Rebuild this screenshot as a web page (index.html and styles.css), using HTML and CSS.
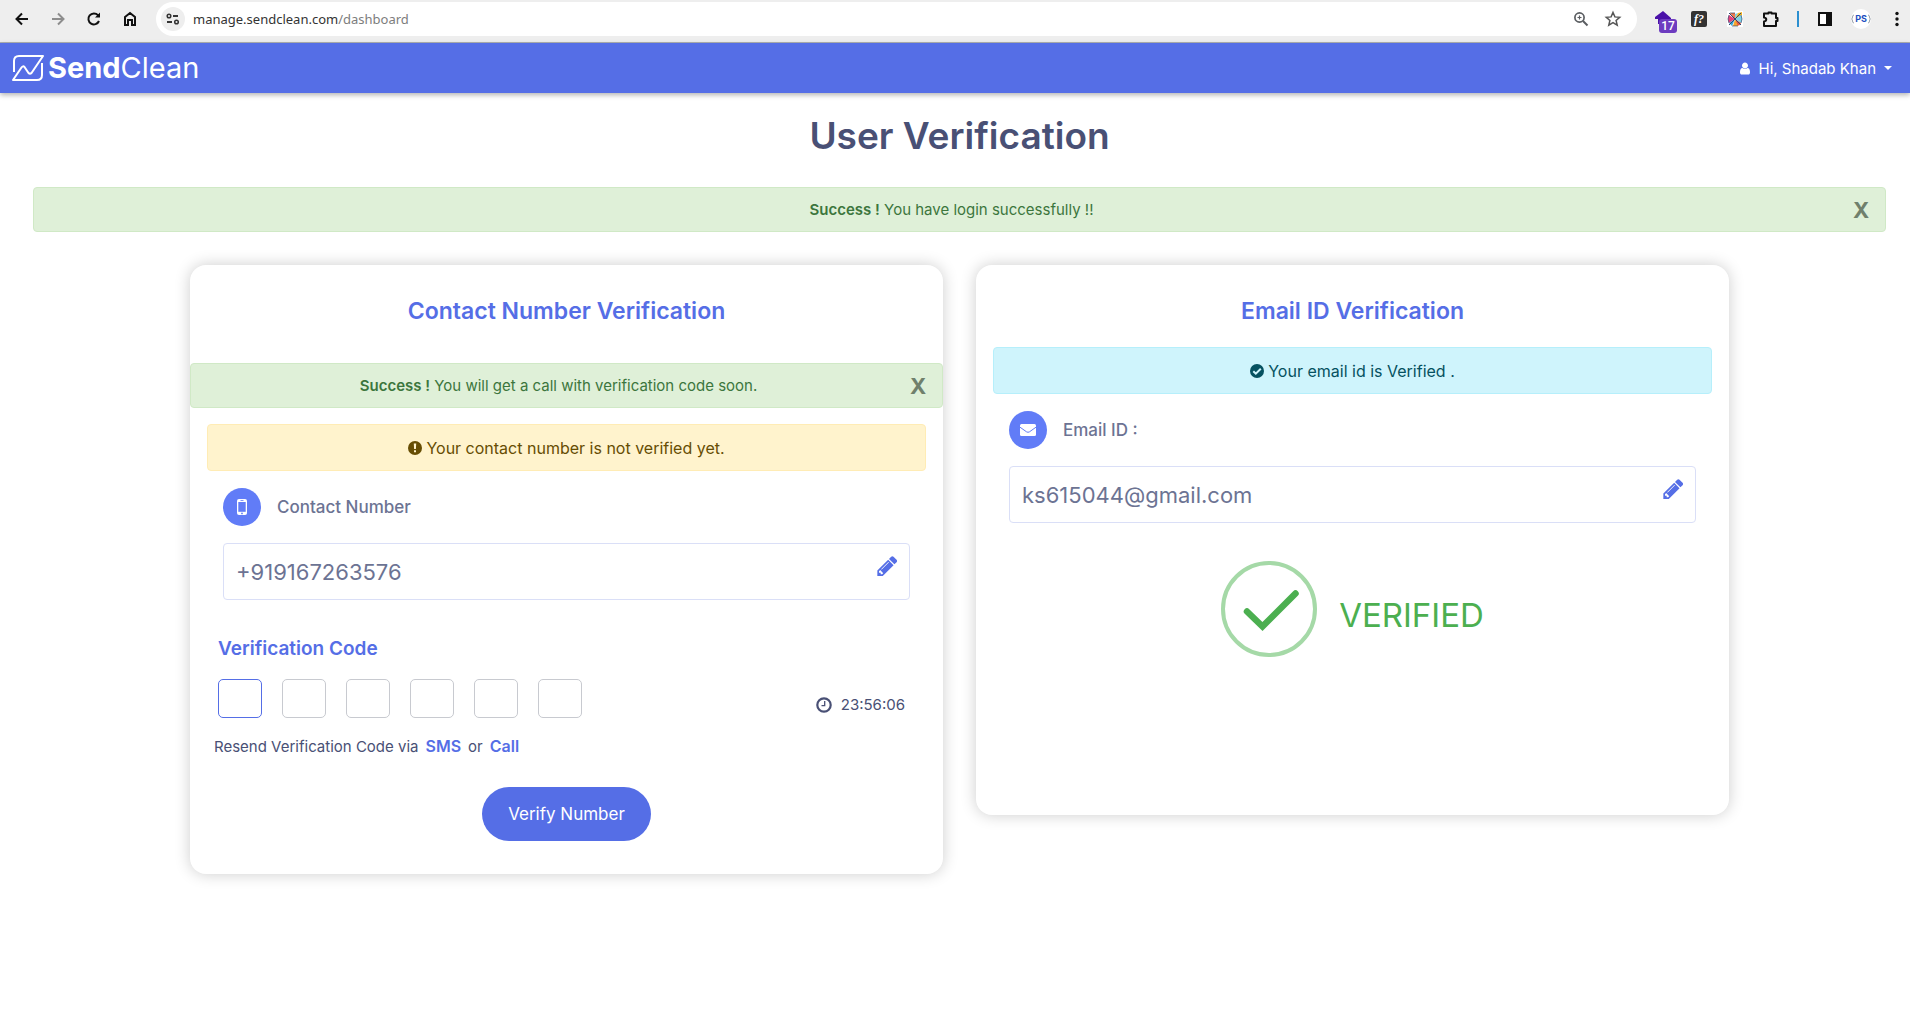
FILE: index.html
```
<!DOCTYPE html>
<html lang="en">
<head>
<meta charset="utf-8">
<title>SendClean - User Verification</title>
<link rel="stylesheet" href="styles.css">
</head>
<body>
<div class="toolbar">
  <div class="tools">
    <button class="tool" aria-label="Back"><svg width="14" height="14" viewBox="0 0 14 14" fill="none" stroke="#111" stroke-width="2"><path d="M13 7H2M7 1.5L1.5 7 7 12.5"/></svg></button>
    <button class="tool" aria-label="Forward"><svg width="14" height="14" viewBox="0 0 14 14" fill="none" stroke="#8d8d8d" stroke-width="2"><path d="M1 7h11M7 1.5L12.500 7 7 12.500"/></svg></button>
    <button class="tool" aria-label="Reload"><svg width="14" height="14" viewBox="0 0 14 14" fill="none" stroke="#111" stroke-width="2"><path d="M12 9A5.500 5.500 0 1 1 11 3.200L12 4.500"/><path d="M13 .5v5H8z" fill="#111" stroke="none"/></svg></button>
    <button class="tool" aria-label="Home"><svg width="14" height="16" viewBox="0 0 14 16" fill="none" stroke="#111" stroke-width="2"><path d="M2 6L7 2l5 4v8H9V9H5v5H2z"/></svg></button>
  </div>
  <div class="omnibox">
    <button class="site-info" aria-label="Site information"><svg width="14" height="12" viewBox="0 0 14 12" fill="none" stroke="#333" stroke-width="2"><circle cx="3" cy="3" r="1.800" stroke-width="1.500"/><path d="M7 3h5M1 9h5"/><circle cx="10.500" cy="9" r="1.800" stroke-width="1.500"/></svg></button>
    <span class="url">manage.sendclean.com<span class="url-path">/dashboard</span></span>
    <button class="tool" aria-label="Zoom"><svg width="16" height="16" viewBox="0 0 16 16" fill="none" stroke="#5a5d61"><circle cx="6.500" cy="6.500" r="4.600" stroke-width="1.700"/><path d="M10 10l4.500 4.500" stroke-width="2"/><path d="M4.500 6.500h4M6.500 4.500v4" stroke-width="1.200"/></svg></button>
    <button class="tool" aria-label="Bookmark"><svg width="16" height="16" viewBox="0 0 16 16" fill="none" stroke="#555" stroke-width="1.500"><path d="M8 1.500l1.900 4.400 4.800.4-3.600 3.100 1.100 4.700L8 11.600l-4.200 2.500 1.100-4.700L1.300 6.300l4.800-.4z"/></svg></button>
  </div>
  <div class="tools">
    <button class="tool" aria-label="Home extension"><svg width="24" height="24" viewBox="0 0 24 24"><path d="M12 4l8 7v1H17V17H7v-5H4v-2z" fill="#4a11a8"/><rect x="8" y="12" width="18" height="14" rx="3" fill="#6d3cc0"/><text x="17" y="23" text-anchor="middle" class="badge-text">17</text></svg></button>
    <button class="tool" aria-label="Font finder"><svg width="16" height="16" viewBox="0 0 16 16"><rect width="16" height="16" rx="2" fill="#333"/><text x="3" y="12" class="font-text">f?</text></svg></button>
    <button class="tool" aria-label="Color extension"><svg width="16" height="16" viewBox="0 0 16 16"><rect width="16" height="16" fill="#fff"/><path d="M8 8L2 4Q0 8 2 12z" fill="#e8407a"/><path d="M8 8L3 2h5z" fill="#f0764a"/><path d="M8 8V3l3-1z" fill="#7ad0e8"/><path d="M8 8l3-6 4-1v3z" fill="#f6b21b"/><path d="M8 8l6-4q2 4 0 8z" fill="#7fd4e8"/><path d="M8 8l6 4-1 2-3 1z" fill="#e8563f"/><path d="M8 8l3 7H6z" fill="#f5a62d"/><path d="M8 8l-3 7-3-3z" fill="#35a8da"/><path d="M2 2l12 12M14 2L2 14" stroke="#31476e" stroke-width="1"/><path d="M2 4Q0 8 2 12M5 15h6M3 2h5M14 4q2 4 0 8" fill="none" stroke="#31476e" stroke-width=".7"/></svg></button>
    <button class="tool" aria-label="Extensions"><svg width="18" height="18" viewBox="0 0 18 18" fill="none" stroke="#111" stroke-width="2" stroke-linejoin="round"><path d="M2 3.500h4.500V2.500h3v1H14V8h1.500v3H14v5H2v-4.500c3-.5 3-3.500 0-4z"/></svg></button>
    <span class="divider"></span>
    <button class="tool" aria-label="Side panel"><svg width="14" height="14" viewBox="0 0 14 14"><rect x="1" y="1" width="12" height="12" fill="#fff" stroke="#111" stroke-width="2"/><path d="M8 1h5v12H8z" fill="#111"/></svg></button>
    <button class="tool" aria-label="Profile"><svg width="20" height="20" viewBox="0 0 20 20"><circle cx="10" cy="10" r="10" fill="#fff"/><path d="M3 6Q1.500 6 1.500 8T.500 10Q1.500 10 1.500 12T3 14M17 6q1.500 0 1.500 2t1 2q-1 0-1 2T17 14" fill="none" stroke="#9aa3ad"/><text x="10" y="13" text-anchor="middle" class="profile-text">PS</text></svg></button>
    <button class="tool" aria-label="Menu"><svg width="4" height="16" viewBox="0 0 4 16" fill="#111"><circle cx="2" cy="2.500" r="1.700"/><circle cx="2" cy="8" r="1.700"/><circle cx="2" cy="13.500" r="1.700"/></svg></button>
  </div>
</div>

<header class="navbar">
  <a class="brand" href="#">
    <svg width="32" height="26" viewBox="0 0 32 26" fill="none" stroke="#fff" stroke-width="2" stroke-linejoin="round"><path d="M2 17V6q0-5 5-5h24L19.500 18q-1.500 1.500-3 0l-4-6q-1.500-1.500-3 .5L1 25h24q5 0 5-5V8"/></svg>
    <span class="brand-name"><b>Send</b>Clean</span>
  </a>
  <button class="user-menu">
    <svg width="12" height="13" viewBox="128 64 1536 1664" fill="#fff"><path d="M1536 1399q0 109-62.500 187t-150.500 78h-854q-88 0-150.500-78t-62.500-187q0-85 8.500-160.500t31.500-152 58.500-131 94-89 134.500-34.500q131 128 313 128t313-128q76 0 134.500 34.500t94 89 58.500 131 31.500 152 8.500 160.500zm-256-887q0 159-112.500 271.500t-271.500 112.500-271.500-112.500-112.500-271.500 112.500-271.500 271.500-112.500 271.500 112.500 112.500 271.500z"/></svg>
    <span>Hi, Shadab Khan</span>
    <span class="caret"></span>
  </button>
</header>

<main class="page">
  <h1>User Verification</h1>
  <div class="alert success" role="alert">
    <span class="alert-text"><strong>Success !</strong> You have login successfully !!</span>
    <button class="close" aria-label="Close">X</button>
  </div>

  <div class="cards">
    <section class="card">
      <h2>Contact Number Verification</h2>
      <div class="alert success inset" role="alert">
        <span class="alert-text"><strong>Success !</strong> You will get a call with verification code soon.</span>
        <button class="close" aria-label="Close">X</button>
      </div>
      <div class="notice warning">
        <svg width="14" height="14" viewBox="0 0 14 14"><circle cx="7" cy="7" r="7" fill="#664d03"/><path d="M5.800 2.500h2.400L7.900 8H6.100zM6 9.200h2v2H6z" fill="#fff3cd"/></svg>
        <span>Your contact number is not verified yet.</span>
      </div>
      <div class="field">
        <div class="field-head">
          <span class="field-icon"><svg width="10" height="16" viewBox="0 0 10 16"><rect width="10" height="16" rx="2" fill="#fff"/><path d="M1.300 3h7.400v9.800H1.300z" fill="#617cf7"/><path d="M3.500 1.200h3v.8h-3z" fill="#617cf7"/><circle cx="5" cy="14.400" r=".9" fill="#617cf7"/></svg></span>
          <label for="phone">Contact Number</label>
        </div>
        <div class="field-box">
          <input id="phone" type="text" value="+919167263576">
          <button class="edit" aria-label="Edit contact number"><svg width="20" height="20" viewBox="128 128 1536 1536" fill="#556ee6"><path d="M363 1536l91-91-235-235-91 91v107h128v128h107zm523-928q0-22-22-22-10 0-17 7l-542 542q-7 7-7 17 0 22 22 22 10 0 17-7l542-542q7-7 7-17zm-54-192l416 416-832 832h-416v-416zm683 96q0 53-37 90l-166 166-416-416 166-165q36-38 90-38 53 0 91 38l235 234q37 39 37 91z"/></svg></button>
        </div>
      </div>
      <div class="code">
        <h3>Verification Code</h3>
        <div class="code-row">
          <input class="digit active" type="text" maxlength="1" aria-label="Digit 1">
          <input class="digit" type="text" maxlength="1" aria-label="Digit 2">
          <input class="digit" type="text" maxlength="1" aria-label="Digit 3">
          <input class="digit" type="text" maxlength="1" aria-label="Digit 4">
          <input class="digit" type="text" maxlength="1" aria-label="Digit 5">
          <input class="digit" type="text" maxlength="1" aria-label="Digit 6">
          <div class="timer">
            <svg width="16" height="16" viewBox="0 0 16 16" fill="none" stroke="#495075"><circle cx="8" cy="8" r="6.700" stroke-width="2.200"/><path d="M8.700 4v4.600H5.500" stroke-width="1.300"/></svg>
            <span>23:56:06</span>
          </div>
        </div>
      </div>
      <p class="resend">Resend Verification Code via <a href="#">SMS</a> or <a href="#">Call</a></p>
      <button class="verify">Verify Number</button>
    </section>

    <section class="card">
      <h2>Email ID Verification</h2>
      <div class="notice info">
        <svg width="14" height="14" viewBox="0 0 14 14"><circle cx="7" cy="7" r="7" fill="#055160"/><path d="M3.300 7.200l2.500 2.500 5-5" fill="none" stroke="#cff4fc" stroke-width="2"/></svg>
        <span>Your email id is Verified .</span>
      </div>
      <div class="field">
        <div class="field-head">
          <span class="field-icon"><svg width="16" height="12" viewBox="0 0 16 12"><rect width="16" height="12" rx="1.500" fill="#fff"/><path d="M0 3.200l6.500 4.600q1.500 1 3 0L16 3.200" fill="none" stroke="#617cf7" stroke-width="1"/></svg></span>
          <label for="email">Email ID :</label>
        </div>
        <div class="field-box">
          <input id="email" type="text" value="ks615044@gmail.com">
          <button class="edit" aria-label="Edit email"><svg width="20" height="20" viewBox="128 128 1536 1536" fill="#556ee6"><path d="M363 1536l91-91-235-235-91 91v107h128v128h107zm523-928q0-22-22-22-10 0-17 7l-542 542q-7 7-7 17 0 22 22 22 10 0 17-7l542-542q7-7 7-17zm-54-192l416 416-832 832h-416v-416zm683 96q0 53-37 90l-166 166-416-416 166-165q36-38 90-38 53 0 91 38l235 234q37 39 37 91z"/></svg></button>
        </div>
      </div>
      <div class="verified">
        <svg width="96" height="96" viewBox="0 0 96 96" fill="none" stroke-linecap="round"><circle cx="48" cy="48" r="46" stroke="#a5d9a7" stroke-width="4"/><path d="M26 50.500L41.500 65.500 74.500 32.500" stroke="#4caf50" stroke-width="6.500"/></svg>
        <span class="verified-text">VERIFIED</span>
      </div>
    </section>
  </div>
</main>
</body>
</html>
```
FILE: styles.css
```
* { box-sizing: border-box; }

body {
  margin: 0;
  background: #fff;
  color: #495075;
  font-family: Inter, "Liberation Sans", sans-serif;
  font-size: 15px;
}

button, input { font-family: inherit; }
button { border: 0; padding: 0; background: none; cursor: pointer; }
a { color: #556ee6; text-decoration: none; }
svg { display: block; flex: none; overflow: visible; }

/* Browser toolbar */
.toolbar {
  display: flex;
  align-items: flex-start;
  gap: 14px;
  height: 43px;
  padding: 2px 1px 0 10px;
  background: #eee;
  border-bottom: 1px solid #aeb1b3;
}
.tools { display: flex; align-items: center; gap: 12px; height: 34px; }
.tool {
  display: flex;
  align-items: center;
  justify-content: center;
  width: 24px;
  height: 24px;
}
.omnibox {
  display: flex;
  align-items: center;
  gap: 8px;
  flex: 1;
  height: 34px;
  padding: 0 12px 0 5px;
  background: #fff;
  border-radius: 17px;
}
.site-info {
  display: flex;
  align-items: center;
  justify-content: center;
  width: 24px;
  height: 24px;
  border-radius: 50%;
  background: #eee;
}
.url { flex: 1; color: #333; font-family: "Noto Sans", sans-serif; font-size: 13px; }
.url-path { color: #7d7d7d; }
.divider { width: 2px; height: 16px; margin: 0 2px; background: #2b8fd0; }
.badge-text { fill: #fff; font: 500 12px Roboto, sans-serif; }
.font-text { fill: #fff; font: italic bold 12px "Liberation Serif", serif; }
.profile-text { fill: #1e4fc0; font: bold 9px Inter, sans-serif; }

/* Site header */
.navbar {
  display: flex;
  align-items: center;
  justify-content: space-between;
  height: 50px;
  padding: 0 18px 0 12px;
  background: #556ee6;
  box-shadow: 0 2px 5px rgba(0, 0, 0, .3);
}
.brand { display: flex; align-items: center; gap: 4px; color: #fff; }
.brand-name { font-size: 29px; line-height: 32px; font-weight: 400; }
.user-menu {
  display: flex;
  align-items: center;
  gap: 8px;
  color: #fff;
  font-size: 15px;
}
.caret { border: 4px solid transparent; border-top-color: #fff; border-bottom: 0; }

/* Page */
.page { padding: 21px 24px 40px 33px; }
h1 {
  margin: 0 0 29px;
  font-size: 37px;
  line-height: 44px;
  font-weight: 600;
  text-align: center;
}
.alert {
  display: flex;
  align-items: center;
  height: 45px;
  padding: 0 16px;
  border: 1px solid #d0e9c6;
  border-radius: 4px;
  font-size: 15px;
}
.success { background: #dff0d8; color: #3c763d; }
.alert-text { flex: 1; text-align: center; }
.alert strong { font-weight: 600; }
.close { width: 16px; color: #70806c; font-size: 22px; line-height: 24px; font-weight: 700; }

.cards {
  display: grid;
  grid-template-columns: 1fr 1fr;
  align-items: start;
  gap: 33px;
  margin: 33px 157px 0;
}
.card {
  display: flex;
  flex-direction: column;
  min-height: 550px;
  padding: 32px 0 33px;
  background: #fff;
  border-radius: 16px;
  box-shadow: 0 0 16px rgba(0, 0, 0, .2);
}
h2 {
  margin: 0 0 22px;
  color: #556ee6;
  font-size: 23px;
  line-height: 28px;
  font-weight: 600;
  text-align: center;
}
.inset { margin: 16px 0; }
.notice {
  display: flex;
  align-items: center;
  justify-content: center;
  gap: 4px;
  height: 47px;
  margin: 0 17px;
  border: 1px solid;
  border-radius: 4px;
  font-size: 16px;
}
.warning { background: #fff3cd; border-color: #ffecb5; color: #664d03; }
.info { background: #cff4fc; border-color: #b6effb; color: #055160; }

.field { margin: 17px 33px 0; }
.field-head {
  display: flex;
  align-items: center;
  gap: 16px;
  margin-bottom: 17px;
  color: #6c7393;
  font-size: 17px;
  font-weight: 500;
}
.field-icon {
  display: flex;
  align-items: center;
  justify-content: center;
  width: 38px;
  height: 38px;
  border-radius: 50%;
  background: #617cf7;
}
.field-box {
  display: flex;
  align-items: flex-start;
  height: 57px;
  border: 1px solid #dadff7;
  border-radius: 4px;
}
.field-box input {
  flex: 1;
  height: 55px;
  padding: 0 12px;
  border: 0;
  background: none;
  color: #6c7393;
  font-size: 22px;
  outline: 0;
}
.edit { margin: 12px 10px; }

.code { margin: 37px 38px 0 28px; }
h3 {
  margin: 0 0 18px;
  color: #556ee6;
  font-size: 19px;
  line-height: 24px;
  font-weight: 600;
}
.code-row { display: flex; gap: 20px; }
.digit {
  width: 44px;
  height: 39px;
  padding: 0;
  border: 1px solid #c8cad0;
  border-radius: 5px;
  text-align: center;
  font-size: 16px;
  outline: 0;
}
.digit.active { border-color: #556ee6; }
.timer {
  display: flex;
  align-items: center;
  align-self: flex-end;
  gap: 9px;
  margin-left: auto;
  line-height: 26px;
}
.resend {
  display: flex;
  align-items: baseline;
  gap: 7px;
  margin: 16px 24px 28px;
  line-height: 24px;
}
.resend a { font-size: 16px; font-weight: 600; }
.verify {
  align-self: center;
  height: 54px;
  padding: 0 26px;
  border-radius: 27px;
  background: #556ee6;
  color: #fff;
  font-size: 17px;
}
.verified {
  display: flex;
  align-items: center;
  justify-content: center;
  gap: 22px;
  margin-top: 38px;
  color: #4caf50;
  font-size: 33px;
  line-height: 40px;
}
.verified-text { padding-top: 12px; }
```
